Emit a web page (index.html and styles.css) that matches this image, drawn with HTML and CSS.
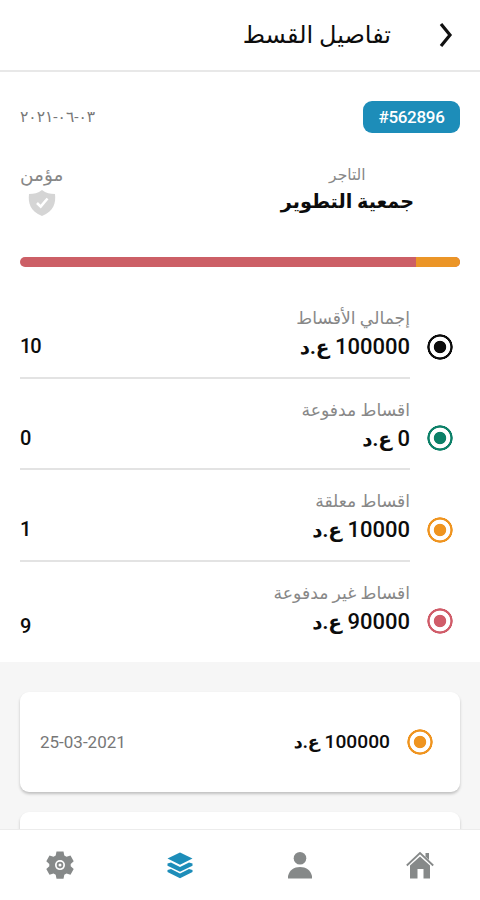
FILE: index.html
```html
<!DOCTYPE html>
<html lang="ar" dir="rtl">
<head>
  <meta charset="UTF-8" />
  <meta name="viewport" content="width=device-width, initial-scale=1.0"/>
  <title>تفاصيل القسط</title>
  <link rel="stylesheet" href="styles.css">
</head>
<body>

  <header class="topbar">
    <svg class="back" viewBox="0 0 14 26"><path d="M2 2l9 11-9 11"/></svg>
    <h1>تفاصيل القسط</h1>
  </header>

  <main>
    <section class="summary">
      <div class="meta">
        <span class="badge" dir="ltr">#562896</span>
        <span class="issued">٢٠٢١-٠٦-٠٣</span>
      </div>

      <div class="parties">
        <div class="merchant">
          <div class="label">التاجر</div>
          <div class="name">جمعية التطوير</div>
        </div>
        <div class="insured">
          <div class="label">مؤمن</div>
          <svg class="shield" viewBox="0 0 28 28">
            <path fill="#d5d5d5" d="M14 1C10 4 6 5 1 5c-1 9 1 17 13 22C26 22 28 14 27 5 22 5 18 4 14 1z"/>
            <path fill="none" stroke="#fff" stroke-width="2.6" d="M9 14l3.7 3.6L19.5 9.500"/>
          </svg>
        </div>
      </div>

      <div class="progress">
        <span class="pending" style="width: 10%"></span>
      </div>

      <ul class="totals">
        <li>
          <span class="dot black"></span>
          <div class="line">
            <div>
              <div class="label">إجمالي الأقساط</div>
              <div class="amount">100000 <span class="cur">ع.د</span></div>
            </div>
            <span class="count">10</span>
          </div>
        </li>
        <li>
          <span class="dot green"></span>
          <div class="line">
            <div>
              <div class="label">اقساط مدفوعة</div>
              <div class="amount">0 <span class="cur">ع.د</span></div>
            </div>
            <span class="count">0</span>
          </div>
        </li>
        <li>
          <span class="dot orange"></span>
          <div class="line">
            <div>
              <div class="label">اقساط معلقة</div>
              <div class="amount">10000 <span class="cur">ع.د</span></div>
            </div>
            <span class="count">1</span>
          </div>
        </li>
        <li>
          <span class="dot red"></span>
          <div class="line">
            <div>
              <div class="label">اقساط غير مدفوعة</div>
              <div class="amount">90000 <span class="cur">ع.د</span></div>
            </div>
            <span class="count">9</span>
          </div>
        </li>
      </ul>
    </section>

    <section class="payments">
      <div class="card">
        <span class="dot orange"></span>
        <div class="amount">100000 <span class="cur">ع.د</span></div>
        <span class="due" dir="ltr">25-03-2021</span>
      </div>
      <div class="card"></div>
    </section>
  </main>

  <nav class="tabs">
    <a>
      <svg viewBox="0 0 28 28">
        <path d="M14 5.500L24 14.500V27.500H17.500V18h-6v9.500H4V14.500z"/>
        <path d="M19.500 2H23v7l-3.500-3.500z"/>
        <path fill="none" stroke="#868989" stroke-width="1.800" d="M.8 14.500L14 2l13.200 12.500"/>
      </svg>
    </a>
    <a>
      <svg viewBox="0 0 28 28">
        <circle cx="14" cy="7.200" r="6.300"/>
        <path d="M2 27.500v-2.500C3.500 19 8 16 14 16s10.500 3 12 9v2.500z"/>
      </svg>
    </a>
    <a class="active">
      <svg viewBox="0 0 28 28">
        <path d="M14 1.500L26.500 7.500 14 13.800 1.500 7.500z"/>
        <path d="M1.500 12.500l3.500-.9 9 4.400 9-4.400 3.500.9v2.200L14 20.800 1.500 14.700z"/>
        <path d="M1.500 18.900l3.500-.9 9 4.400 9-4.400 3.500.9v2.200L14 27.200 1.500 21.100z"/>
      </svg>
    </a>
    <a>
      <svg viewBox="0 0 28 28">
        <path fill-rule="evenodd" d="M10.500.5h7l.8 4 2.200 1.300 4-1.300 3.200 5.700-3 2.700v2.400l3 2.700-3.200 5.700-4-1.300-2.200 1.300-.8 4h-7l-.8-4-2.200-1.300-4 1.300L.3 18l3-2.700v-2.400l-3-2.700 3.200-5.700 4 1.300 2.200-1.300zM14 9.100a5 5 0 1 0 0 10 5 5 0 0 0 0-10z"/>
        <circle cx="14" cy="14.100" r="3.300"/>
        <circle cx="14" cy="14.100" r="1.500" fill="#fff"/>
      </svg>
    </a>
  </nav>

</body>
</html>
```

FILE: styles.css
```css
* {
  box-sizing: border-box;
}
body {
  margin: 0;
  height: 900px;
  display: flex;
  flex-direction: column;
  overflow: hidden;
  background: #fff;
  color: #0c0c0c;
  font-family: Roboto, "DejaVu Sans", sans-serif;
}
.topbar {
  flex: none;
  height: 72px;
  display: flex;
  align-items: center;
  padding: 0 27px;
  border-bottom: 2px solid #e8e8e8;
}
.back {
  width: 14px;
  height: 26px;
  fill: none;
  stroke: #111;
  stroke-width: 3.2;
}
h1 {
  margin: 0 48px 0 0;
  font-size: 24px;
  font-weight: 400;
  line-height: 40px;
}
main {
  flex: 1;
  min-height: 0;
  overflow: hidden;
}
.summary {
  height: 590px;
  padding: 29px 20px 0;
}
.meta {
  display: flex;
  justify-content: space-between;
  height: 32px;
}
.badge {
  width: 97px;
  border-radius: 9px;
  background: #1d8db9;
  color: #fff;
  font-size: 17px;
  font-weight: 500;
  letter-spacing: -.3px;
  line-height: 32px;
  text-align: center;
}
.issued {
  direction: ltr;
  unicode-bidi: bidi-override;
  color: #777;
  font-size: 15.5px;
  letter-spacing: 1px;
  line-height: 32px;
}
.label {
  color: #888;
  font-size: 17.2px;
  line-height: 28px;
  white-space: nowrap;
}
.parties {
  display: flex;
  justify-content: space-between;
  height: 96px;
  margin-top: 28px;
  padding-right: 46px;
  text-align: center;
}
.merchant .label {
  font-size: 15.5px;
}
.insured .label {
  font-size: 18.500px;
}
.name {
  font-size: 19.2px;
  font-weight: 700;
  line-height: 26px;
}
.shield {
  display: block;
  width: 28px;
  height: 28px;
  margin: 0 auto;
}
.progress {
  height: 10px;
  border-radius: 5px;
  background: #cc5f66;
  overflow: hidden;
}
.progress span {
  display: block;
  height: 100%;
}
.pending {
  background: #eb9527;
}
.totals {
  margin: 20px 0 0;
  padding: 0;
  list-style: none;
}
.totals li {
  display: flex;
  align-items: center;
  height: 91.5px;
  padding-right: 7px;
}
.line {
  flex: 1;
  display: flex;
  justify-content: space-between;
  height: 100%;
  margin-right: 17px;
  padding-top: 17px;
  border-bottom: 2px solid #e3e3e3;
}
li:last-child .line {
  border-bottom: 0;
}
.dot {
  flex: none;
  width: 26px;
  height: 26px;
  border-radius: 50%;
  background: radial-gradient(circle closest-side, currentColor 5.8px, transparent 6.600px, transparent 10px, currentColor 10.700px, currentColor 12.4px, transparent 13px);
}
.totals .dot {
  margin-top: 28px;
}
.black {
  color: #0c0c0c;
}
.green {
  color: #0c8068;
}
.orange {
  color: #ef941f;
}
.red {
  color: #d05c69;
}
.amount {
  font-size: 22px;
  font-weight: 500;
  line-height: 29px;
  white-space: nowrap;
}
.cur {
  font-size: 20px;
  font-weight: 700;
}
.count {
  margin-top: 28px;
  font-size: 20px;
  font-weight: 500;
  letter-spacing: -1px;
  line-height: 28px;
}
li:last-child .count {
  margin-top: 33px;
}
.payments {
  height: 240px;
  padding: 30px 20px;
  background: #f6f6f6;
}
.card {
  display: flex;
  align-items: center;
  height: 100px;
  margin-bottom: 20px;
  padding: 0 27px 0 20px;
  border-radius: 9px;
  background: #fff;
  box-shadow: 0 2px 3px rgba(0, 0, 0, .22);
}
.card .amount {
  margin-right: 17px;
  font-size: 19.200px;
}
.card .cur {
  font-size: 17.500px;
}
.due {
  margin-right: auto;
  color: #777;
  font-size: 17px;
}
.tabs {
  flex: none;
  display: flex;
  height: 71px;
  border-top: 1px solid #ececec;
  background: #fff;
}
.tabs a {
  flex: 1;
  display: flex;
  align-items: center;
  justify-content: center;
  fill: #868989;
}
.tabs .active {
  fill: #1d8db9;
}
.tabs svg {
  width: 28px;
  height: 28px;
}
```
